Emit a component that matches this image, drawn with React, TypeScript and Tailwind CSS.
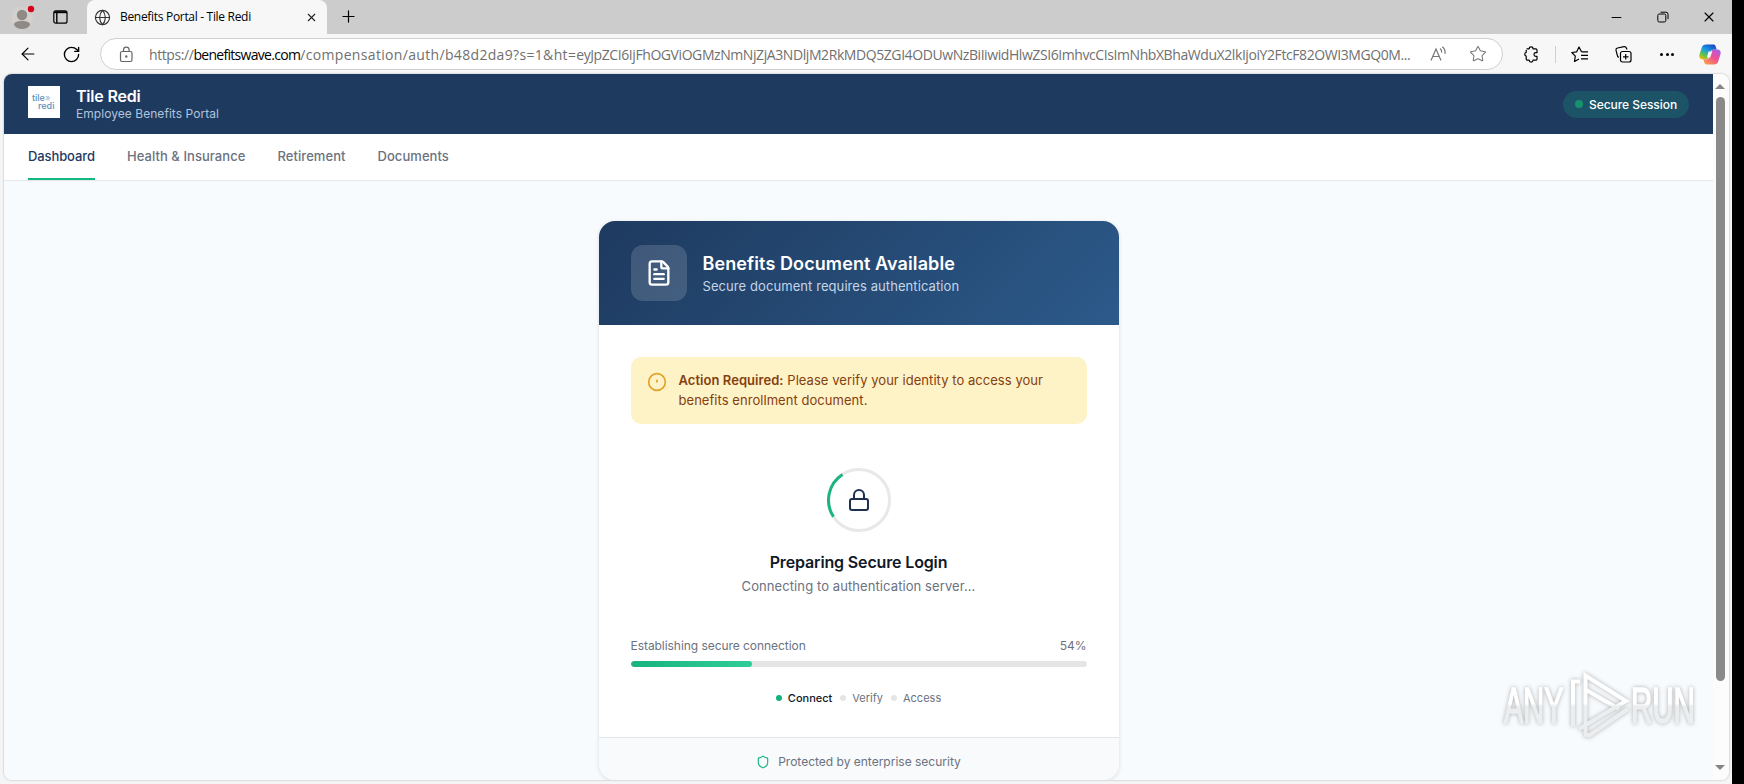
import clsx from "clsx";
import {
  ArrowLeft,
  FileText,
  Globe,
  Lock,
  Minus,
  Plus,
  RotateCw,
  Shield,
  Star,
  X,
} from "lucide-react";

const navItems = ["Dashboard", "Health & Insurance", "Retirement", "Documents"];
const steps = ["Connect", "Verify", "Access"];

function TabStrip() {
  return (
    <div className="flex h-[34px] bg-[#cccccc] text-black">
      <div className="flex w-[87px] items-center pl-3">
        <svg width="24" height="26" viewBox="0 0 24 26">
          <circle cx="10" cy="14" r="11" fill="#d3d0cd" />
          <circle cx="10" cy="11" r="5.2" fill="#8f8a86" />
          <path d="M2 21c0-3 3-4 8-4s8 1 8 4c-2 3-5 4-8 4s-6-1-8-4z" fill="#8f8a86" />
          <circle cx="19" cy="5" r="3.2" fill="#d9001b" />
        </svg>
        <svg className="ml-[17px]" width="15" height="14" viewBox="0 0 15 14" fill="none" stroke="black" strokeWidth="1.2">
          <rect x="0.8" y="0.8" width="13.2" height="12.4" rx="2" />
          <path d="M1 2.2h13" strokeWidth="2" />
          <path d="M3.8 3v10" strokeWidth="1.4" />
        </svg>
      </div>
      <div className="flex w-[240px] items-center rounded-t-lg bg-[#f7f7f7] pl-[7px]">
        <Globe className="size-[17px]" strokeWidth={1.6} color="#333" />
        <span className="ml-[9px] w-[185px] text-[12px] tracking-[-0.31px]">
          Benefits Portal - Tile Redi
        </span>
        <X className="size-[13px]" strokeWidth={2} color="#222" />
      </div>
      <Plus className="mt-[7px] ml-[12px] size-[19px]" strokeWidth={1.5} />
      <div className="ml-auto flex items-center pr-[15px]">
        <Minus className="size-[15px]" strokeWidth={1.8} />
        <svg className="ml-[33px]" width="12" height="12" viewBox="0 0 12 12" fill="none" stroke="black">
          <rect x="0.8" y="3" width="8" height="8" rx="1.5" />
          <path d="M3.500 1.200h5.500a2 2 0 0 1 2 2v5" />
        </svg>
        <X className="ml-[32px] size-[16px]" strokeWidth={1.7} />
      </div>
    </div>
  );
}

function CopilotLogo() {
  return (
    <svg width="22" height="21" viewBox="0 0 22 21">
      <defs>
        <linearGradient id="cool" x1="0.8" y1="0" x2="0.2" y2="1">
          <stop offset="0" stopColor="#1746c9" />
          <stop offset="0.45" stopColor="#1b9de0" />
          <stop offset="0.75" stopColor="#5fc34b" />
          <stop offset="1" stopColor="#f2b70c" />
        </linearGradient>
        <linearGradient id="warm" x1="0.9" y1="0" x2="0.2" y2="1">
          <stop offset="0" stopColor="#a661e8" />
          <stop offset="0.5" stopColor="#ee4f94" />
          <stop offset="1" stopColor="#fd9a4a" />
        </linearGradient>
      </defs>
      <path d="M7 .5h7.500c1.600 0 2 1.200 2.500 3l.6 2.200h-3.200c-1.800 0-2.500 1-3 2.600L9.600 13c-.6 1.800-1.400 2.500-3 2.500H3.500C.7 15.500-.2 13 .6 10.300L2.800 3.500C3.600 1.300 4.800.5 7 .5z" fill="url(#cool)" />
      <path d="M15 20.500H7.800c-1.700 0-2.200-1.100-2.700-2.800l-.6-2.200h2.800c1.800 0 2.700-.9 3.200-2.500L12.200 8c.6-1.700 1.400-2.500 3-2.500h3.300c2.800 0 3.700 2.400 2.900 5.100l-2.200 6.900c-.8 2.200-2 3-4.200 3z" fill="url(#warm)" />
      <path d="M9.500 7.500h3.700l-2 6H7.800z" fill="#f7f7f7" />
    </svg>
  );
}

function Toolbar() {
  return (
    <div className="flex h-[40px] items-center bg-[#f7f7f7]">
      <ArrowLeft className="ml-[18px] size-[20px]" strokeWidth={1.4} />
      <RotateCw className="ml-[24px] size-[19px]" strokeWidth={1.7} />
      <div className="ml-[19px] flex h-8 w-[1403px] items-center rounded-full border border-[#d0d0d0] bg-white">
        <svg className="ml-[18px]" width="15" height="17" viewBox="0 0 15 17" fill="none" stroke="#666" strokeWidth="1.2">
          <rect x="1.5" y="5.5" width="11.5" height="10" rx="1.5" />
          <path d="M4.500 5.500V4a2.800 2.800 0 0 1 5.600 0v1.500" />
          <circle cx="7.3" cy="10.5" r="0.6" fill="#666" />
        </svg>
        <div className="ml-[15px] w-[1265px] text-[14px] whitespace-nowrap text-[#707070]">
          <span className="tracking-[-0.42px]">https://</span>
          <span className="tracking-[-0.7px] text-black">benefitswave.com</span>
          <span className="tracking-[0.33px]">/compensation/auth/b48d2da9?s=1&amp;ht=</span>
          <span className="tracking-[-0.42px]">
            eyJpZCI6IjFhOGViOGMzNmNjZjA3NDljM2RkMDQ5ZGI4ODUwNzBiIiwidHlwZSI6ImhvcCIsImNhbXBhaWduX2lkIjoiY2FtcF82OWI3MGQ0M...
          </span>
        </div>
        <svg className="ml-[16px]" width="17" height="16" viewBox="0 0 17 16" fill="none" stroke="#777" strokeWidth="1.2">
          <path d="M1 14.500 6 3l5 11.500M2.800 10.500h6.400M10 2.500q2 1.500 1.700 4M12.300.8q3.300 2.700 2.700 7" />
        </svg>
        <Star className="ml-[22px] size-[18px]" strokeWidth={1.4} color="#777" />
      </div>
      <svg className="ml-[20px]" width="16" height="17" viewBox="0 0 16 17" fill="none" stroke="black" strokeWidth="1.2" strokeLinejoin="round">
        <path d="M3.500 2.800h2.700a1.900 1.900 0 0 1 3.800 0h2.700q1.300 0 1.300 1.300v2.600h-1.200a1.800 1.800 0 0 0 0 3.600h1.200v2.600q0 1.300-1.300 1.300H10a1.900 1.900 0 0 1-3.800 0H4.500q-1.300 0-1.300-1.300v-2.700a1.900 1.900 0 0 1 0-3.700V4" />
      </svg>
      <div className="ml-[16px] h-[17px] w-px bg-[#d0d0d0]" />
      <svg className="ml-[15px]" width="18" height="17" viewBox="0 0 18 17" fill="none" stroke="black" strokeWidth="1.2" strokeLinejoin="round">
        <path d="M10.500 5.800 8 1 5.700 5.800.8 6.500l3.500 3.700-.8 5.300L8 13M10.500 5.800H17M10 9.300h7M10 12.800h7" />
      </svg>
      <svg className="ml-[26px]" width="17" height="17" viewBox="0 0 17 17" fill="none" stroke="black" strokeWidth="1.2">
        <rect x="5.5" y="5.5" width="10.5" height="10.5" rx="2" />
        <path d="M10.700 8v5.500M8 10.800h5.500M3.700 11.500C2 10.500 2.200 9 1.700 6.800L1 4.200Q.7 2.500 2.500 2l6.500-1.300q1.800-.3 2.500 1.500l.5 1.300" />
      </svg>
      <div className="ml-[28px] flex gap-[2.5px]">
        <div className="size-[3px] rounded-full bg-black" />
        <div className="size-[3px] rounded-full bg-black" />
        <div className="size-[3px] rounded-full bg-black" />
      </div>
      <div className="mr-[11px] ml-auto">
        <CopilotLogo />
      </div>
    </div>
  );
}

function PortalHeader() {
  return (
    <header className="flex h-[60px] items-center bg-[#1e3a5f] px-6">
      <div className="-mt-1 flex size-8 flex-col bg-white pt-[8px] text-[9px] leading-[8px] font-medium text-[#5b8fb9]">
        <span className="ml-1 whitespace-nowrap">
          tile<span className="text-[#9fbbd0]">»</span>
        </span>
        <span className="ml-[10px]">redi</span>
      </div>
      <div className="mt-px ml-4">
        <h1 className="text-[16px] leading-[17px] font-semibold tracking-[-0.2px] text-white">
          Tile Redi
        </h1>
        <p className="text-[12px] leading-[17px] tracking-[0.05px] text-[#b0c4de]">
          Employee Benefits Portal
        </p>
      </div>
      <div className="ml-auto flex h-[27px] w-[126px] items-center rounded-full bg-[#1c5367] pl-3">
        <div className="size-2 rounded-full bg-[#15936f]" />
        <span className="mt-px ml-1.5 text-[12px] font-medium tracking-[-0.05px] whitespace-nowrap text-white">
          Secure Session
        </span>
      </div>
    </header>
  );
}

function DocumentCard() {
  return (
    <div className="w-[520px] shrink-0 overflow-hidden rounded-2xl bg-white shadow-[0_1px_4px_rgba(0,0,0,0.12)]">
      <div className="flex h-[104px] items-center bg-linear-135 from-[#1e3a5f] to-[#2c5a8a] px-8">
        <div className="flex size-14 items-center justify-center rounded-xl bg-white/15">
          <FileText className="size-7 text-white" strokeWidth={2} />
        </div>
        <div className="mt-[3px] ml-4">
          <h2 className="text-[18px] leading-[24px] font-semibold tracking-[0.1px] text-white">
            Benefits Document Available
          </h2>
          <p className="text-[13px] leading-[21px] tracking-[0.08px] text-[#c5d5e8]">
            Secure document requires authentication
          </p>
        </div>
      </div>
      <div className="flex flex-col px-8 pt-8">
        <div className="flex h-[67px] rounded-[10px] bg-[#fef3c7] pt-[13px] pl-4">
          <svg className="mt-0.5" width="20" height="20" viewBox="0 0 24 24" fill="none" stroke="#e3a02a" strokeWidth="2">
            <circle cx="12" cy="12" r="10" />
            <path d="M12 10v2" strokeLinecap="round" />
          </svg>
          <p className="ml-3 text-[13px] leading-[20px] tracking-[0.05px] whitespace-nowrap text-[#85400f]">
            <strong className="font-semibold">Action Required:</strong> Please
            verify your identity to access your
            <br />
            benefits enrollment document.
          </p>
        </div>
        <div className="relative mt-11 flex size-16 items-center justify-center self-center">
          <svg className="absolute inset-0" width="64" height="64" viewBox="0 0 64 64" fill="none" strokeWidth="3">
            <circle cx="32" cy="32" r="30.5" stroke="#e8e8e8" />
            <path d="M15.500 6.500A30.500 30.500 0 0 0 6.500 48.800" stroke="#1bb583" />
          </svg>
          <Lock className="size-6 text-[#1e3050]" strokeWidth={2} />
        </div>
        <h3 className="mt-[18px] text-center text-[16px] leading-6 font-semibold tracking-[-0.15px] text-[#111827]">
          Preparing Secure Login
        </h3>
        <p className="text-center text-[13px] leading-6 tracking-[0.09px] text-[#6b7280]">
          Connecting to authentication server...
        </p>
        <div className="mt-[39px] flex justify-between text-[12px] leading-[18px] tracking-[-0.05px] text-[#6b7280]">
          <span>Establishing secure connection</span>
          <span>54%</span>
        </div>
        <div className="mt-[6px] h-[6px] overflow-hidden rounded-full bg-[#e5e5e5]">
          <div className="h-full w-[121px] rounded-full bg-linear-to-r from-[#18b37f] to-[#30cd97]" />
        </div>
        <div className="mt-[23px] flex justify-center gap-2 text-[11px] leading-4">
          {steps.map((step, i) => (
            <div key={step} className="flex items-center gap-1.5">
              <div className={clsx("size-1.5 rounded-full", i === 0 ? "bg-[#12b17d]" : "bg-[#e5e5e5]")} />
              <span className={i === 0 ? "font-medium text-[#111827]" : "text-[#6b7280]"}>
                {step}
              </span>
            </div>
          ))}
        </div>
      </div>
      <div className="mt-[31px] flex h-[60px] items-start justify-center gap-2 border-t border-[#dfe5ea] bg-[#f8fafc] pt-[15px] text-[12px] leading-[18px] text-[#6b7280]">
        <Shield className="mt-0.5 size-[14px] text-[#1bb583]" />
        Protected by enterprise security
      </div>
    </div>
  );
}

function Scrollbar() {
  return (
    <div className="flex w-4 flex-col items-center bg-[#fcfcfc] pt-[10px] pr-0.5 pb-[10px]">
      <div className="border-x-[5px] border-b-[5px] border-x-transparent border-b-[#858585]" />
      <div className="mt-2 h-[584px] w-[9px] rounded-full bg-[#8a8a8a]" />
      <div className="mt-auto border-x-[5px] border-t-[5px] border-x-transparent border-t-[#858585]" />
    </div>
  );
}

function Watermark() {
  return (
    <div className="absolute right-[31px] bottom-[42px] drop-shadow-[0_0_2px_rgba(0,0,0,0.3)]">
      <svg width="196" height="66" viewBox="0 0 196 66" fill="none">
        <defs>
          <linearGradient id="mark" x1="0" y1="0" x2="0" y2="66" gradientUnits="userSpaceOnUse">
            <stop offset="0.48" stopColor="#ffffff" />
            <stop offset="0.52" stopColor="#ebedee" />
          </linearGradient>
        </defs>
        <g fill="url(#mark)" stroke="url(#mark)" strokeWidth="1.6" fontFamily="Liberation Sans" fontSize="50">
          <text x="0" y="51" transform="translate(2 0) scale(0.58 1)">ANY</text>
          <text x="0" y="51" transform="translate(129 0) scale(0.59 1)">RUN</text>
        </g>
        <path
          d="M78 9.500h-7v45M83.500 61V3.500L124 29 77 57M83.500 17.500 117 37M82 62.500l5 1L126 37"
          stroke="url(#mark)"
          strokeWidth="4"
        />
      </svg>
    </div>
  );
}

export default function App() {
  return (
    <div className="flex h-[784px] w-[1744px] overflow-hidden bg-black font-['Open_Sans',sans-serif]">
      <div className="flex w-[1732px] flex-col bg-[#f5f5f5]">
        <TabStrip />
        <Toolbar />
        <div className="relative ml-[4px] flex h-[706px] w-[1725px] overflow-hidden rounded-lg bg-[#fcfcfc] font-['Inter',sans-serif] shadow-[0_0_2px_rgba(0,0,0,0.35)]">
          <div className="flex w-[1709px] flex-col bg-[#f8fbfd]">
            <PortalHeader />
            <nav className="flex h-[47px] gap-8 border-b border-[#e5e7eb] bg-white px-6 text-[13px] font-medium">
              {navItems.map((item, i) => (
                <a
                  key={item}
                  className={clsx(
                    "flex h-[46px] items-center border-b-2 pt-0.5",
                    i === 0
                      ? "border-[#10b981] tracking-[-0.1px] text-[#1e3a5f]"
                      : "border-transparent tracking-[0.06px] text-[#6b7280]"
                  )}
                >
                  {item}
                </a>
              ))}
            </nav>
            <main className="flex h-[599px] justify-center overflow-hidden pt-10">
              <DocumentCard />
            </main>
          </div>
          <Scrollbar />
          <Watermark />
        </div>
      </div>
    </div>
  );
}
